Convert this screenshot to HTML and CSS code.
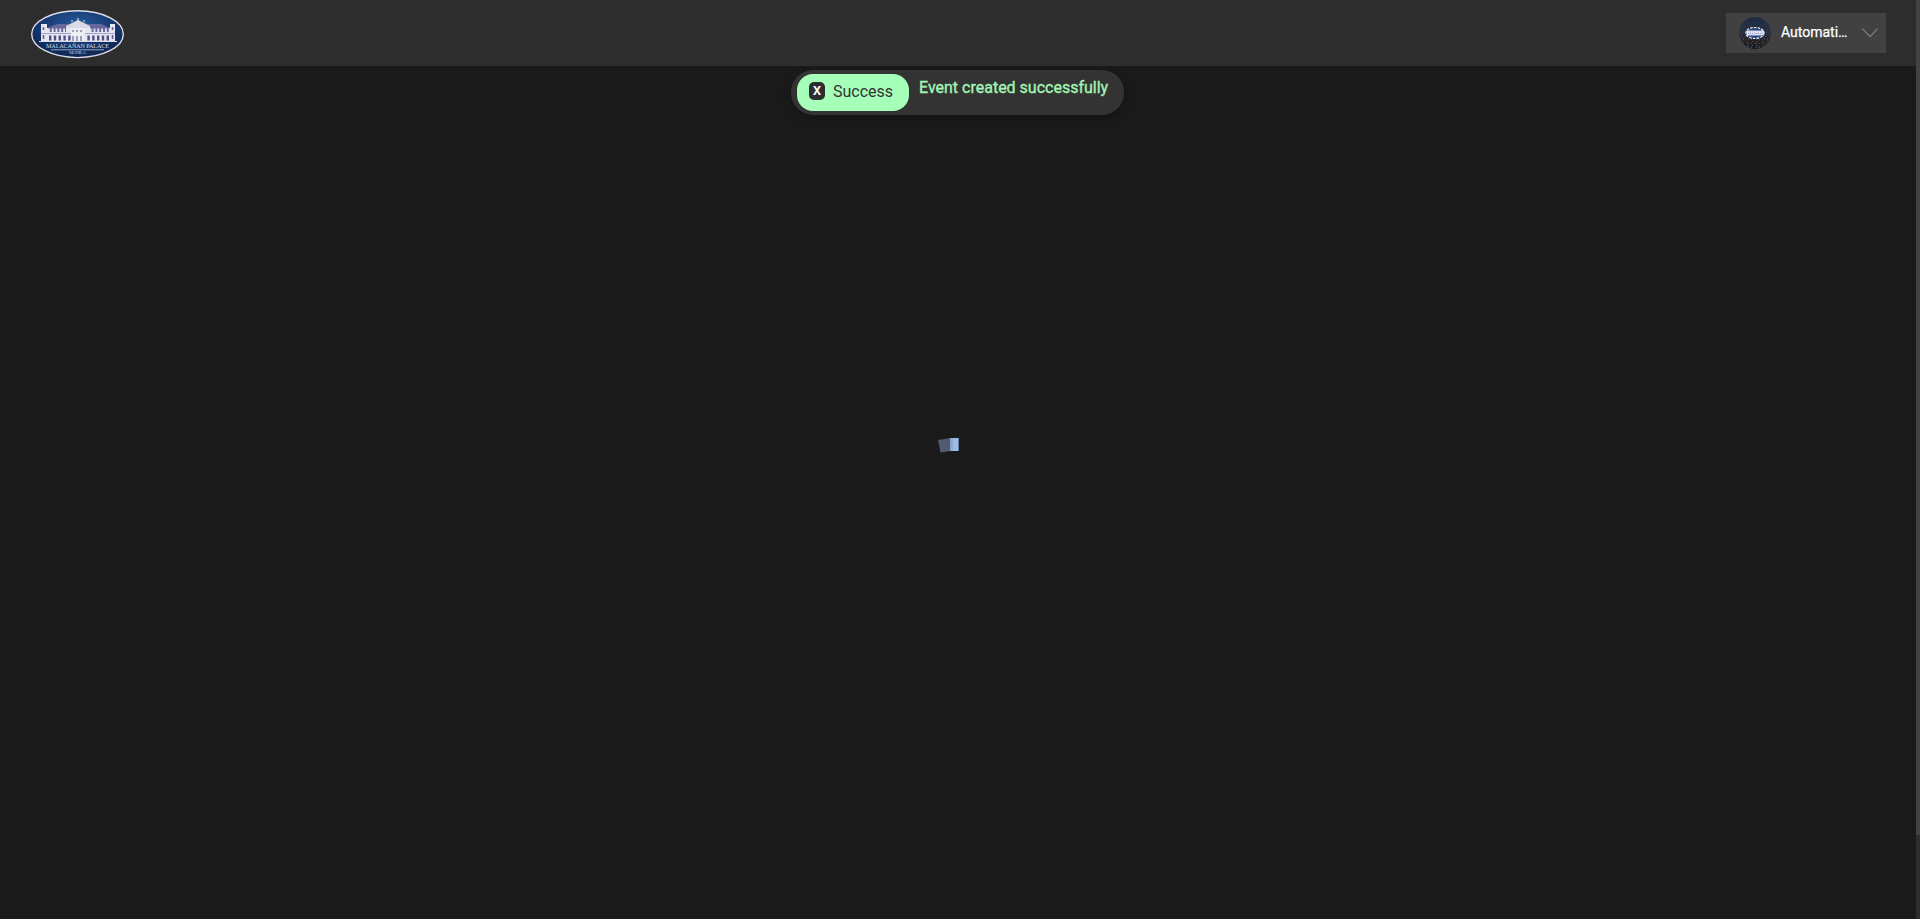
FILE: index.html
```html
<!DOCTYPE html>
<html lang="en">
<head>
<meta charset="utf-8">
<title>Malacañan Palace</title>
<link rel="stylesheet" href="styles.css">
</head>
<body>
<header class="header">
  <svg class="logo" viewBox="0 0 94 50">
    <defs>
      <radialGradient id="blue" cx=".5" cy=".3" r=".6"><stop offset="0" stop-color="#285b98"/><stop offset=".55" stop-color="#183e78"/><stop offset="1" stop-color="#102956"/></radialGradient>
    </defs>
    <ellipse cx="46.5" cy="24.2" rx="45.8" ry="23.4" fill="url(#blue)" stroke="#dcdce9" stroke-width="1.4"/>
    <path d="M16 18L26 14H38L47 11L57 14H70L79 18V22H16Z" fill="#66679b"/>
    <path d="M35 16L47 10L59 16V18H35Z" fill="#d9d9e8"/>
    <path d="M47 8V12M41 12V10M53 12V10" stroke="#e9e9f2"/>
    <path d="M10 14H16V18H79V14H84V31H10Z" fill="#e7e6f0"/>
    <path d="M17 20H35M59 20H78" stroke="#66679b" stroke-width="4"/>
    <path d="M10 23.5H84" stroke="#a4a2c4"/>
    <path d="M17 20.5H78" stroke="#e7e6f0" stroke-width="4" stroke-dasharray="1.8 2"/>
    <path d="M18 28H78" stroke="#4d5187" stroke-width="5" stroke-dasharray="2.4 2.4"/>
    <path d="M12.5 17V20M81.5 17V20M12.5 25V29M81.5 25V29" stroke="#555d90" stroke-width="1.5"/>
    <path d="M40 18H54V31H40Z" fill="#eeedf4"/>
    <path d="M42 20V22M46 20V22M50 20V22M42 26V31M46 26V31M50 26V31" stroke="#76769f" stroke-width="1.3"/>
    <path d="M8 31.5H86" stroke="#d8dbe9"/>
    <text class="logo-name" x="15" y="38" textLength="63">MALACAÑAN PALACE</text>
    <path d="M20 39.8H73" stroke="#b8c7df" stroke-width=".8"/>
    <text class="logo-city" x="38" y="44.3" textLength="17">MANILA</text>
  </svg>
  <button class="account" type="button">
    <svg class="avatar" viewBox="0 0 32 32">
      <defs>
        <clipPath id="round"><circle cx="16" cy="16" r="16"/></clipPath>
        <linearGradient id="dusk" x2="0" y2="1"><stop offset="0" stop-color="#1d2b40"/><stop offset=".5" stop-color="#2a3344"/><stop offset=".65" stop-color="#29262a"/><stop offset="1" stop-color="#171b23"/></linearGradient>
      </defs>
      <g clip-path="url(#round)">
        <path d="M0 0H32V32H0Z" fill="url(#dusk)"/>
        <path d="M2 19.5H30M4 26.5H28" stroke="#594638" stroke-dasharray="1 3 2 2"/>
        <path d="M1 22H31M9 30H24" stroke="#344765" stroke-width="2" stroke-dasharray="1 2 1 4"/>
        <path d="M3 24.5H30M8 28.5H26" stroke="#5f4a3e" stroke-dasharray="1 4"/>
      </g>
      <ellipse cx="16" cy="16" rx="9" ry="5.5" fill="#24457e" stroke="#fff" stroke-width="1.2" stroke-dasharray="2.4 1.3"/>
      <path d="M7.5 13.5H25V18.5H7.5Z" fill="#d9dcec"/>
      <path d="M9 16.5H24" stroke="#a4acd0" stroke-dasharray="1 1"/>
    </svg>
    <span class="account-name">Automati…</span>
    <svg class="chevron" viewBox="0 0 16 10"><path d="M.4 .7L8 8.6L15.6 .7" fill="none" stroke="#828282" stroke-width="1.1"/></svg>
  </button>
</header>
<main class="page">
  <svg class="loader" viewBox="0 0 22 16">
    <path d="M0 3L12.5 1V14L2.5 15.5Z" fill="#505b6e"/>
    <path d="M12 1H21V14H12Z" fill="#9dbbe6"/>
    <path d="M12 1H15V14H12Z" fill="#8ba6ce"/><path d="M20 1H21V14H20Z" fill="#6d819f"/>
  </svg>
</main>
<div class="toast" role="status">
  <div class="badge"><span class="mark">X</span><span>Success</span></div>
  <span class="message">Event created successfully</span>
</div>
<div class="scrollbar"><div class="thumb"></div></div>
</body>
</html>
```

FILE: styles.css
```css
* { box-sizing: border-box; }
body {
  margin: 0;
  height: 919px;
  overflow: hidden;
  display: flex;
  flex-direction: column;
  background: #1a1a1a;
  font-family: Roboto, sans-serif;
}
.header {
  height: 66px;
  flex: none;
  display: flex;
  align-items: center;
  justify-content: space-between;
  padding: 0 34px 0 31px;
  background: #2d2d2d;
}
.logo { width: 94px; height: 50px; margin-top: 4px; }
.logo-name { font: 6.2px "Liberation Serif", serif; fill: #d0dcec; }
.logo-city { font: 4.8px "Liberation Serif", serif; fill: #c0d0e6; }
.account {
  width: 160px;
  height: 40px;
  display: flex;
  align-items: center;
  padding: 0 8px 0 13px;
  border: 0;
  background: #414141;
  color: #fff;
  font: 400 14px Roboto, sans-serif;
  -webkit-text-stroke: .25px;
}
.avatar { width: 32px; height: 32px; flex: none; }
.account-name {
  margin-left: 10px;
  padding-bottom: 2px;
  white-space: nowrap;
}
.chevron { width: 16px; height: 10px; margin-left: auto; }
.page {
  flex: 1;
  display: flex;
  justify-content: center;
  align-items: flex-start;
  padding: 371px 22px 0 0;
}
.loader { width: 22px; height: 16px; }
.toast {
  position: absolute;
  top: 70px;
  left: 791px;
  width: 333px;
  height: 45px;
  display: flex;
  padding: 4px 6px;
  border-radius: 22px;
  background: #333;
  box-shadow: 0 3px 8px #0004;
  font-size: 16px;
}
.badge {
  width: 112px;
  height: 37px;
  display: flex;
  align-items: center;
  gap: 8px;
  padding: 0 12px 3px;
  border-radius: 16px;
  background: #a5ffb8;
  color: #333;
}
.mark {
  width: 16px;
  height: 18px;
  border-radius: 5px;
  background: #2d2d2d;
  color: #fff;
  font: 700 12px/18px "Noto Sans", sans-serif;
  text-align: center;
}
.message {
  margin: 4px 0 0 10px;
  color: #a4f5b4;
  line-height: 19px;
  white-space: nowrap;
  -webkit-text-stroke: .35px;
}
.scrollbar {
  position: absolute;
  top: 0;
  right: 0;
  width: 4px;
  height: 919px;
  background: #2d2d2d;
}
.thumb { height: 835px; background: #424242; }
```
